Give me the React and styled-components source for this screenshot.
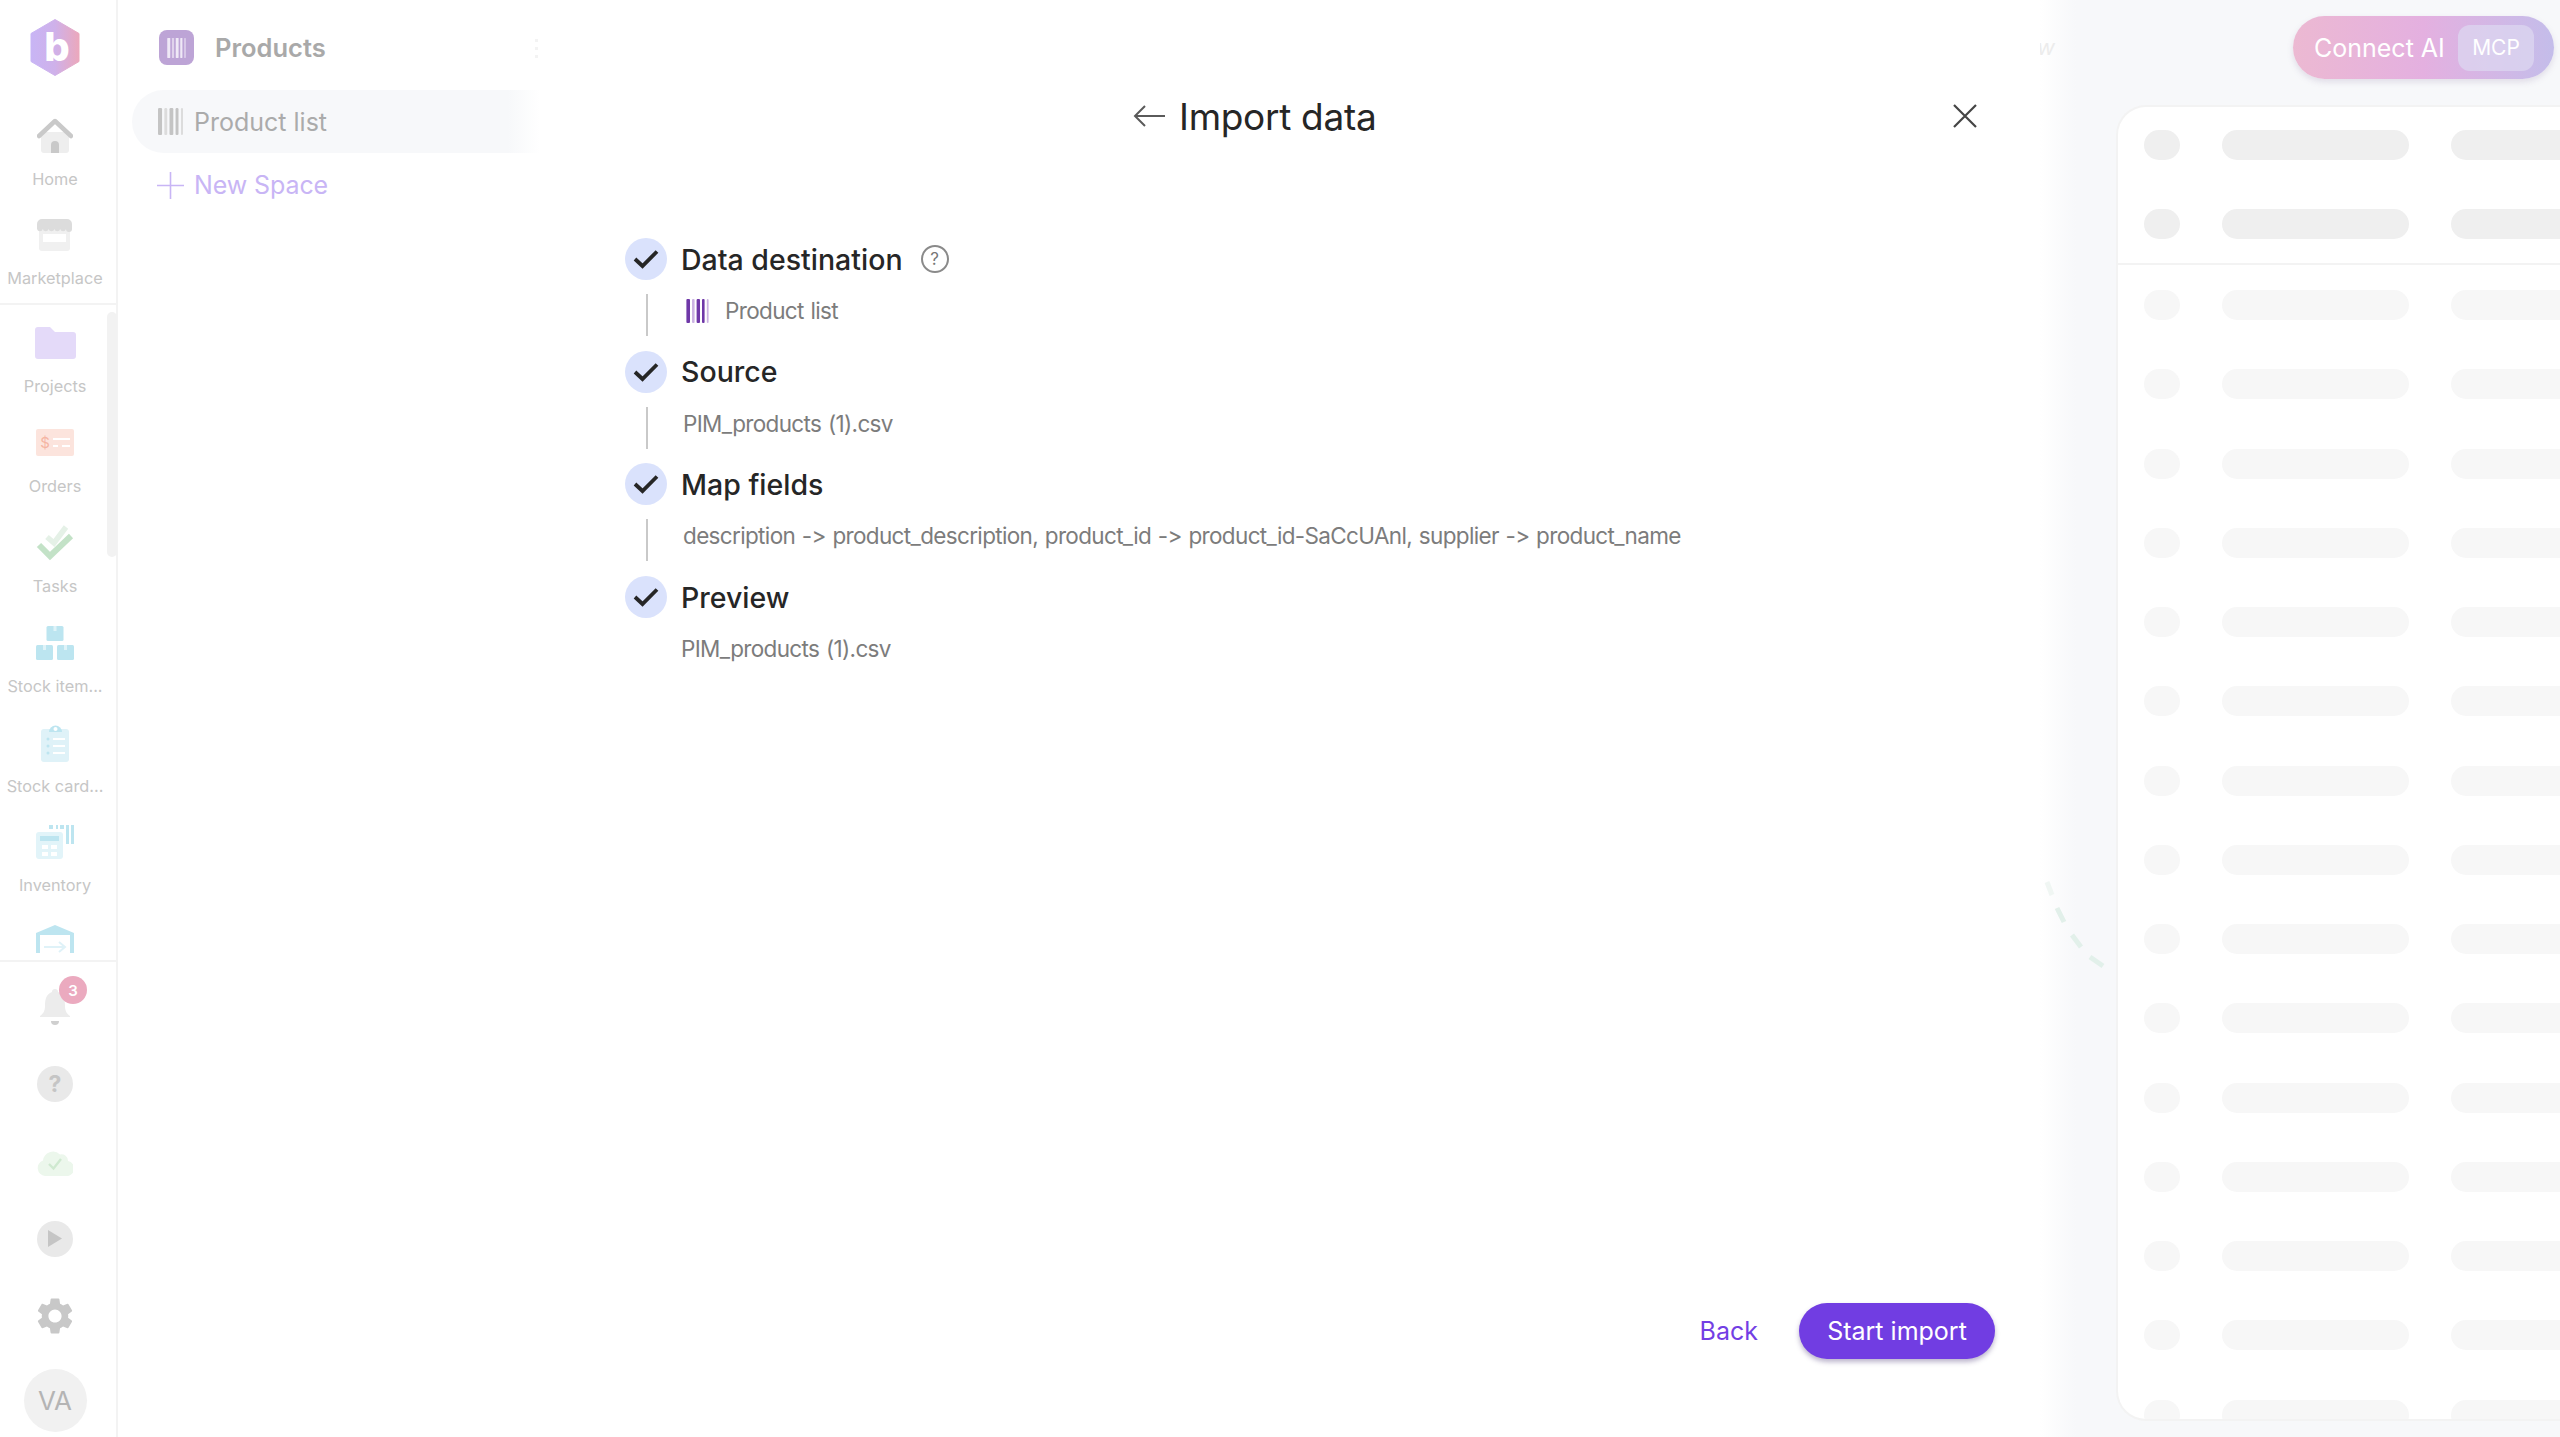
import styled, { createGlobalStyle } from "styled-components";
import { MdSettings } from "react-icons/md";

const GlobalStyle = createGlobalStyle`
  * { box-sizing: border-box; }
  html, body { margin: 0; padding: 0; height: 100%; background: #fff; overflow: hidden; }
  body { font-family: "Inter", "Open Sans", sans-serif; }
`;

const Page = styled.div`
  display: flex;
  height: 100vh;
  width: 100%;
  overflow: hidden;
`;

/* left rail */
const Rail = styled.aside`
  position: relative;
  flex: 0 0 118px;
  display: flex;
  flex-direction: column;
  border-right: 2px solid #f3f3f3;
`;

const RailTop = styled.div`
  flex: 0 0 305px;
  padding: 19px 6px 0 0;
  display: flex;
  flex-direction: column;
  align-items: center;
  border-bottom: 2px solid #f3f3f3;
`;

const LogoWrap = styled.div`
  height: 57px;
  margin-bottom: 35px;
`;

const RailScroll = styled.div`
  flex: 0 0 648px;
  overflow: hidden;
  padding: 13px 6px 0 0;
  display: flex;
  flex-direction: column;
  align-items: center;
  gap: 19.9px;
`;

const RailTopItems = styled.div`
  display: flex;
  flex-direction: column;
  align-items: center;
  gap: 19px;
`;

const RailItem = styled.div`
  width: 100%;
  flex: 0 0 80px;
  display: flex;
  flex-direction: column;
  align-items: center;
`;

const RailIcon = styled.div`
  height: 50px;
  display: flex;
  align-items: center;
  justify-content: center;
`;

const RailLabel = styled.div`
  margin-top: 6px;
  font-size: 16.3px;
  line-height: 24px;
  color: #c6c6c6;
  white-space: nowrap;
`;

const Scrollbar = styled.div`
  position: absolute;
  left: 107px;
  top: 312px;
  width: 10px;
  height: 245px;
  border-radius: 5px;
  background: #f2f2f2;
`;

const RailBottom = styled.div`
  flex: 1;
  margin-top: 7px;
  border-top: 2px solid #f3f3f3;
  padding: 27px 6px 0 0;
  display: flex;
  flex-direction: column;
  align-items: center;
  gap: 41.3px;
`;

const BottomSlot = styled.div`
  position: relative;
  height: 36px;
  width: 36px;
  display: flex;
  align-items: center;
  justify-content: center;
`;

const RoundIcon = styled.div`
  width: 36px;
  height: 36px;
  border-radius: 50%;
  background: #e9e9e9;
  color: #c5c5c5;
  font-size: 23px;
  font-weight: 700;
  display: flex;
  align-items: center;
  justify-content: center;
`;

const Badge = styled.span`
  position: absolute;
  top: -13px;
  left: 22px;
  width: 28px;
  height: 28px;
  border-radius: 50%;
  background: #ebaabf;
  color: #fff;
  font-size: 15px;
  font-weight: 600;
  display: flex;
  align-items: center;
  justify-content: center;
`;

const Avatar = styled.div`
  margin-top: -6px;
  width: 63px;
  height: 63px;
  flex: 0 0 63px;
  border-radius: 50%;
  background: #f1f1f1;
  color: #b4b4b4;
  font-size: 26px;
  display: flex;
  align-items: center;
  justify-content: center;
`;

/* spaces panel */
const SpacesPanel = styled.nav`
  flex: 0 0 422px;
  padding: 30px 0 0 14px;
`;

const SpacesHeader = styled.div`
  position: relative;
  display: flex;
  align-items: center;
  padding-left: 27px;
  height: 35px;
  gap: 21px;
`;

const SpacesTitle = styled.div`
  font-size: 25.5px;
  font-weight: 600;
  color: #a9a9a9;
`;

const Kebab = styled.span`
  position: absolute;
  right: 2px;
  top: 9px;
  width: 3px;
  height: 20px;
  background: repeating-linear-gradient(180deg, #f3f3f3 0 3px, transparent 3px 8px);
`;

const SpaceIconBox = styled.div`
  width: 35px;
  height: 35px;
  border-radius: 8px;
  background: #bda4d6;
  display: flex;
  align-items: center;
  justify-content: center;
`;

const SpaceRow = styled.div`
  margin-top: 25px;
  height: 63px;
  display: flex;
  align-items: center;
  gap: 10px;
  padding-left: 25px;
  border-radius: 32px 0 0 32px;
  background: linear-gradient(90deg, #f7f8fa 92%, #fff 100%);
`;

const SpaceRowText = styled.span`
  font-size: 25px;
  color: #ababab;
`;

const NewSpace = styled.div`
  margin-top: 19px;
  display: flex;
  align-items: center;
  gap: 10px;
  padding-left: 25px;
  height: 26px;
  font-size: 25px;
  letter-spacing: -0.1px;
  color: #c8b5f5;
`;

/* import dialog */
const Dialog = styled.main`
  flex: 0 0 1500px;
  display: flex;
  flex-direction: column;
`;

const DialogHeader = styled.header`
  display: flex;
  align-items: center;
  margin-top: 96px;
  height: 40px;
  padding: 0 63px 0 593px;
`;

const DialogTitle = styled.h1`
  margin: 0 0 0 14px;
  font-size: 37px;
  font-weight: 400;
  letter-spacing: -0.3px;
  color: #262626;
  white-space: nowrap;
`;

const CloseButton = styled.button`
  margin-left: auto;
  padding: 0;
  border: none;
  background: none;
  display: flex;
`;

const Steps = styled.div`
  margin-top: 102px;
  padding-left: 85px;
  display: flex;
  flex-direction: column;
`;

const Step = styled.section`
  height: 112.7px;
  display: flex;
  flex-direction: column;
`;

const StepHead = styled.div`
  display: flex;
  align-items: center;
  height: 42px;
`;

const StepCheck = styled.div`
  width: 42px;
  height: 42px;
  border-radius: 50%;
  background: #dae2fc;
  display: flex;
  align-items: center;
  justify-content: center;
`;

const StepTitle = styled.h2`
  margin: 0 0 0 14px;
  font-size: 28.5px;
  font-weight: 450;
  color: #262626;
`;

const HelpIcon = styled.span`
  margin-left: 18px;
  width: 28px;
  height: 28px;
  border: 2px solid #8a8a8a;
  border-radius: 50%;
  color: #777;
  font-size: 17px;
  display: flex;
  align-items: center;
  justify-content: center;
`;

const StepBody = styled.div`
  margin: 14px 0 0 21px;
  padding: 0 0 9px ${(p) => (p.$line ? "35px" : "33px")};
  flex: 0 0 42px;
  display: flex;
  align-items: center;
  gap: 15px;
  border-left: 2px solid ${(p) => (p.$line ? "#c9c9c9" : "transparent")};
  font-size: 22.5px;
  letter-spacing: -0.65px;
  word-spacing: 1px;
  color: #7c7c7c;
  white-space: nowrap;
`;

const BarcodeSlot = styled.span`
  margin-left: 2px;
  display: flex;
`;

const DialogFooter = styled.footer`
  margin-top: auto;
  padding: 0 45px 78px 0;
  display: flex;
  justify-content: flex-end;
  align-items: center;
  gap: 41px;
`;

const BackButton = styled.button`
  padding: 0;
  border: none;
  background: none;
  font: inherit;
  font-size: 25px;
  color: #733ee4;
`;

const StartButton = styled.button`
  width: 196px;
  height: 56px;
  border: none;
  border-radius: 28px;
  background: #713de2;
  color: #fff;
  font: inherit;
  font-size: 25px;
  box-shadow: 0 3px 5px rgba(60, 40, 110, 0.35);
`;

/* table behind the dialog */
const Backdrop = styled.div`
  position: relative;
  flex: 1;
  min-width: 0;
  display: flex;
  flex-direction: column;
  overflow: hidden;
  background: linear-gradient(90deg, #fff 0, #f7f8fa 36px);
`;

const TopBar = styled.div`
  padding: 16px 6px 0 0;
  display: flex;
  justify-content: flex-end;
`;

const ConnectButton = styled.div`
  width: 261px;
  height: 63px;
  border-radius: 32px;
  padding: 0 20px 0 21px;
  background: linear-gradient(90deg, #ecb9d2 0%, #e4b0e0 50%, #c4bdea 100%);
  box-shadow: 0 3px 6px rgba(120, 100, 150, 0.18);
  display: flex;
  align-items: center;
  justify-content: space-between;
  color: #fff;
  font-size: 25px;
`;

const McpChip = styled.span`
  width: 76px;
  height: 46px;
  border-radius: 12px;
  background: rgba(220, 215, 240, 0.75);
  display: flex;
  align-items: center;
  justify-content: center;
  font-size: 21px;
`;

const GhostLetter = styled.span`
  position: absolute;
  left: -3px;
  top: 34px;
  font-size: 22px;
  font-style: italic;
  color: #ececec;
`;

const Trail = styled.svg`
  position: absolute;
  left: 0;
  top: 858px;
`;

const Card = styled.div`
  flex: 1;
  margin: 26px 0 16px 76px;
  border: 2px solid #f3f3f3;
  border-right: none;
  border-radius: 30px 0 0 30px;
  background: #fff;
  overflow: hidden;
`;

const CardHead = styled.div`
  display: flex;
  flex-direction: column;
  gap: 49px;
  padding: 23px 0 24px 26px;
  border-bottom: 2px solid #f3f3f3;
`;

const CardBody = styled.div`
  display: flex;
  flex-direction: column;
  gap: 49.25px;
  padding: 25px 0 0 26px;
`;

const SkeletonRow = styled.div`
  display: flex;
  gap: 42px;
  height: 30px;
`;

const SkeletonDot = styled.div`
  flex: 0 0 36px;
  border-radius: 15px;
  background: ${(p) => (p.$strong ? "#efefef" : "#f7f7f7")};
`;

const SkeletonBar = styled.div`
  flex: 0 0 187px;
  border-radius: 15px;
  background: ${(p) => (p.$strong ? "#efefef" : "#f7f7f7")};
`;

const BarcodeIcon = ({ width, height, dark, light, radius = 1 }) => {
  const bars = [
    [0, 3.6, dark],
    [5.6, 2.6, light],
    [10.2, 3.4, dark],
    [15.6, 2.6, dark],
    [20.4, 1.8, light],
  ];
  return (
    <svg width={width} height={height} viewBox={`0 0 22.2 24`}>
      {bars.map(([x, w, c]) => (
        <rect key={x} x={x} y="0" width={w} height="24" rx={radius} fill={c} />
      ))}
    </svg>
  );
};

const Logo = () => (
  <svg width="50" height="57" viewBox="0 0 50 57">
    <defs>
      <linearGradient id="logoFill" x1="0" x2="1" y1="0" y2="0">
        <stop offset="0" stopColor="#c8b5f5" />
        <stop offset="0.5" stopColor="#cfb1ea" />
        <stop offset="1" stopColor="#eba8bc" />
      </linearGradient>
    </defs>
    <path d="M25 0.5 L49 14.5 V42.5 L25 56.5 L1 42.5 V14.5 Z" fill="url(#logoFill)" stroke="url(#logoFill)" strokeLinejoin="round" />
    <text x="27" y="42" textAnchor="middle" fontFamily="Inter" fontWeight="800" fontSize="40" fill="#fff">b</text>
  </svg>
);

const HomeIcon = () => (
  <svg width="36" height="36" viewBox="0 0 36 36">
    <rect x="4" y="14" width="28" height="21" rx="3" fill="#eeeeee" />
    <path d="M2 18 L18 3 L34 18" fill="none" stroke="#c9c9c9" strokeWidth="4.5" strokeLinecap="round" strokeLinejoin="round" />
    <path d="M14 35 V27 a4 4 0 0 1 8 0 V35 Z" fill="#c9c9c9" />
  </svg>
);

const MarketIcon = () => (
  <svg width="35" height="32" viewBox="0 0 35 32">
    <rect x="2" y="10" width="31" height="22" rx="3" fill="#f0f0f0" />
    <rect x="6" y="15" width="23" height="8" fill="#fff" />
    <path d="M5 0 H30 a5 5 0 0 1 5 5 V10 a3 3 0 0 1 -6 0 a3 3 0 0 1 -5.8 0 a3 3 0 0 1 -5.8 0 a3 3 0 0 1 -5.8 0 a3 3 0 0 1 -5.8 0 a3 3 0 0 1 -5.8 0 V5 a5 5 0 0 1 5 -5 Z" fill="#dcdcdc" />
  </svg>
);

const FolderIcon = () => (
  <svg width="41" height="32" viewBox="0 0 41 32">
    <path d="M3 0 H15 L20 5 H38 a3 3 0 0 1 3 3 V29 a3 3 0 0 1 -3 3 H3 a3 3 0 0 1 -3 -3 V3 a3 3 0 0 1 3 -3 Z" fill="#e4daf9" />
  </svg>
);

const OrdersIcon = () => (
  <svg width="38" height="27" viewBox="0 0 38 27">
    <rect width="38" height="27" rx="2" fill="#fce4dd" />
    <text x="9" y="19" textAnchor="middle" fontFamily="Inter" fontSize="15" fill="#f5b5a3">$</text>
    <path d="M17 10 H34 M17 17 H22 M26 17 H34" stroke="#fff" strokeWidth="2" />
  </svg>
);

const TasksIcon = () => (
  <svg width="38" height="37" viewBox="0 0 38 37">
    <path d="M11 13 L18 19 L30 3" fill="none" stroke="#e5f1e7" strokeWidth="5.5" />
    <path d="M3 21 L14 32 L35 12" fill="none" stroke="#c3e2c7" strokeWidth="6" />
  </svg>
);

const BoxesIcon = () => (
  <svg width="38" height="34" viewBox="0 0 38 34">
    <g fill="#bce5f0">
      <rect x="10.5" y="0" width="17" height="15" rx="1.5" />
      <rect x="0" y="19" width="17" height="15" rx="1.5" />
      <rect x="21" y="19" width="17" height="15" rx="1.5" />
    </g>
    <g fill="#dff3f8">
      <rect x="17.5" y="0" width="3" height="5" />
      <rect x="7" y="19" width="3" height="5" />
      <rect x="28" y="19" width="3" height="5" />
    </g>
  </svg>
);

const ClipboardIcon = () => (
  <svg width="29" height="38" viewBox="0 0 29 38">
    <rect x="0" y="5" width="28" height="33" rx="3" fill="#dff2f8" />
    <path d="M8 8 a6.5 6.5 0 0 1 13 0 Z" fill="#bde5f0" />
    <circle cx="14.5" cy="5" r="2" fill="#fff" />
    <g fill="#bde5f0">
      <circle cx="7" cy="15" r="1.5" />
      <circle cx="7" cy="22" r="1.5" />
      <circle cx="7" cy="29" r="1.5" />
    </g>
    <path d="M12 15 H24 M12 22 H24 M12 29 H24" stroke="#fff" strokeWidth="2" />
  </svg>
);

const InventoryIcon = () => (
  <svg width="38" height="34" viewBox="0 0 38 34">
    <g fill="#bde5f0">
      <rect x="13" y="0" width="4" height="4" />
      <rect x="20" y="0" width="2" height="4" />
      <rect x="24" y="0" width="4" height="4" />
      <rect x="30" y="0" width="3" height="19" />
      <rect x="35" y="0" width="3" height="19" />
    </g>
    <rect x="0" y="7" width="27" height="27" rx="3" fill="#e2f4f9" />
    <rect x="4" y="11" width="19" height="5" fill="#bde5f0" />
    <g fill="#fff">
      <rect x="6" y="20" width="6" height="4" />
      <rect x="15" y="20" width="6" height="4" />
      <rect x="6" y="27" width="6" height="4" />
      <rect x="15" y="27" width="6" height="4" />
    </g>
  </svg>
);

const WarehouseIcon = () => (
  <svg width="38" height="34" viewBox="0 0 38 34">
    <path d="M19 0 L38 8 V34 H0 V8 Z" fill="#bde5f0" />
    <rect x="4" y="10" width="30" height="24" fill="#fff" />
    <path d="M8 22 H28 M23 17 L29 22 L23 27" fill="none" stroke="#dff2f8" strokeWidth="2" />
  </svg>
);

const BellIcon = () => (
  <svg width="30" height="36" viewBox="0 0 30 36">
    <path d="M15 0 a3 3 0 0 1 3 3 C24 5 25 11 25 17 C25 22 27 25 30 27 V28 H0 V27 C3 25 5 22 5 17 C5 11 6 5 12 3 a3 3 0 0 1 3 -3 Z" fill="#ececec" />
    <path d="M11 32 H19 a4 4 0 0 1 -8 0 Z" fill="#cfcfcf" />
  </svg>
);

const CloudIcon = () => (
  <svg width="36" height="28" viewBox="0 0 36 28">
    <path d="M8 28 a8 8 0 0 1 -2 -15.5 a10 10 0 0 1 17 -6 a6.5 6.5 0 0 1 8 6.5 a7.5 7.5 0 0 1 -3 15 Z" fill="#ecf7ec" />
    <path d="M12 16 L16.5 20.5 L24 11" fill="none" stroke="#cfe9d0" strokeWidth="2.4" />
  </svg>
);

const PlayGlyph = () => (
  <svg width="16" height="17" viewBox="0 0 16 17">
    <path d="M1 0 L15 8.5 L1 17 Z" fill="#c5c5c5" />
  </svg>
);

const PlusIcon = () => (
  <svg width="27" height="27" viewBox="0 0 27 27">
    <path d="M13.5 0 V27 M0 13.5 H27" stroke="#c8b5f5" strokeWidth="1.6" />
  </svg>
);

const CheckMark = () => (
  <svg width="26" height="20" viewBox="0 0 26 20">
    <path d="M2 10 L9.5 17 L24 2.5" fill="none" stroke="#262626" strokeWidth="3.8" />
  </svg>
);

const BackArrow = () => (
  <svg width="32" height="24" viewBox="0 0 32 24">
    <path d="M32 12 H2 M12 2 L2 12 L12 22" fill="none" stroke="#5a5a5a" strokeWidth="2" />
  </svg>
);

const CloseIcon = () => (
  <svg width="24" height="24" viewBox="0 0 24 24">
    <path d="M1 1 L23 23 M23 1 L1 23" stroke="#444" strokeWidth="2.2" />
  </svg>
);

const railTop = [
  { label: "Home", icon: <HomeIcon /> },
  { label: "Marketplace", icon: <MarketIcon /> },
];

const railScroll = [
  { label: "Projects", icon: <FolderIcon /> },
  { label: "Orders", icon: <OrdersIcon /> },
  { label: "Tasks", icon: <TasksIcon /> },
  { label: "Stock item...", icon: <BoxesIcon /> },
  { label: "Stock card...", icon: <ClipboardIcon /> },
  { label: "Inventory", icon: <InventoryIcon /> },
  { icon: <WarehouseIcon /> },
];

const steps = [
  { title: "Data destination", help: true, body: "Product list", barcode: true, line: true },
  { title: "Source", body: "PIM_products (1).csv", line: true },
  {
    title: "Map fields",
    body: "description -> product_description, product_id -> product_id-SaCcUAnl, supplier -> product_name",
    line: true,
  },
  { title: "Preview", body: "PIM_products (1).csv" },
];

const trail = [
  { d: "M7 24 L12 37", color: "#f0f6f3" },
  { d: "M17 50 L24 64", color: "#e2f0ea" },
  { d: "M32 77 L41 89", color: "#e2f0ea" },
  { d: "M50 99 L63 108", color: "#e2f0ea" },
];

const Skeleton = ({ strong }) => (
  <SkeletonRow>
    <SkeletonDot $strong={strong} />
    <SkeletonBar $strong={strong} />
    <SkeletonBar $strong={strong} />
  </SkeletonRow>
);

const App = () => {
  return (
    <Page>
      <GlobalStyle />
      <Rail>
        <RailTop>
          <LogoWrap>
            <Logo />
          </LogoWrap>
          <RailTopItems>
            {railTop.map((item) => (
              <RailItem key={item.label}>
                <RailIcon>{item.icon}</RailIcon>
                <RailLabel>{item.label}</RailLabel>
              </RailItem>
            ))}
          </RailTopItems>
        </RailTop>
        <RailScroll>
          {railScroll.map((item, i) => (
            <RailItem key={i}>
              <RailIcon>{item.icon}</RailIcon>
              {item.label && <RailLabel>{item.label}</RailLabel>}
            </RailItem>
          ))}
        </RailScroll>
        <Scrollbar />
        <RailBottom>
          <BottomSlot>
            <BellIcon />
            <Badge>3</Badge>
          </BottomSlot>
          <BottomSlot>
            <RoundIcon>?</RoundIcon>
          </BottomSlot>
          <BottomSlot>
            <CloudIcon />
          </BottomSlot>
          <BottomSlot>
            <RoundIcon>
              <PlayGlyph />
            </RoundIcon>
          </BottomSlot>
          <BottomSlot>
            <MdSettings size={44} color="#c8c8c8" style={{ flex: "none" }} />
          </BottomSlot>
          <Avatar>VA</Avatar>
        </RailBottom>
      </Rail>

      <SpacesPanel>
        <SpacesHeader>
          <SpaceIconBox>
            <BarcodeIcon width={19} height={20} dark="#efe8f6" light="#e0d3ec" radius={0.5} />
          </SpaceIconBox>
          <SpacesTitle>Products</SpacesTitle>
          <Kebab />
        </SpacesHeader>
        <SpaceRow>
          <BarcodeIcon width={27} height={27} dark="#c4c4c4" light="#dcdcdc" />
          <SpaceRowText>Product list</SpaceRowText>
        </SpaceRow>
        <NewSpace>
          <PlusIcon />
          New Space
        </NewSpace>
      </SpacesPanel>

      <Dialog>
        <DialogHeader>
          <BackArrow />
          <DialogTitle>Import data</DialogTitle>
          <CloseButton>
            <CloseIcon />
          </CloseButton>
        </DialogHeader>
        <Steps>
          {steps.map((step) => (
            <Step key={step.title}>
              <StepHead>
                <StepCheck>
                  <CheckMark />
                </StepCheck>
                <StepTitle>{step.title}</StepTitle>
                {step.help && <HelpIcon>?</HelpIcon>}
              </StepHead>
              <StepBody $line={step.line}>
                {step.barcode && (
                  <BarcodeSlot>
                    <BarcodeIcon width={25} height={24} dark="#6f38a8" light="#cbb3e2" />
                  </BarcodeSlot>
                )}
                {step.body}
              </StepBody>
            </Step>
          ))}
        </Steps>
        <DialogFooter>
          <BackButton>Back</BackButton>
          <StartButton>Start import</StartButton>
        </DialogFooter>
      </Dialog>

      <Backdrop>
        <GhostLetter>w</GhostLetter>
        <TopBar>
          <ConnectButton>
            Connect AI
            <McpChip>MCP</McpChip>
          </ConnectButton>
        </TopBar>
        <Trail width="70" height="112" viewBox="0 0 70 112">
          {trail.map((dash) => (
            <path key={dash.d} d={dash.d} stroke={dash.color} strokeWidth="5" fill="none" />
          ))}
        </Trail>
        <Card>
          <CardHead>
            <Skeleton strong />
            <Skeleton strong />
          </CardHead>
          <CardBody>
            {Array.from({ length: 15 }, (_, i) => (
              <Skeleton key={i} />
            ))}
          </CardBody>
        </Card>
      </Backdrop>
    </Page>
  );
};

export default App;
